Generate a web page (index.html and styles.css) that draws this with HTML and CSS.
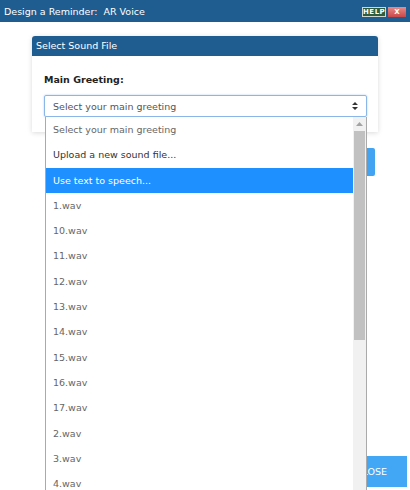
FILE: index.html
```html
<!DOCTYPE html>
<html lang="en">
<head>
    <meta charset="UTF-8">
    <meta name="viewport" content="width=device-width, initial-scale=1.0">
    <title>Design a Reminder</title>
    <link rel="stylesheet" href="styles.css">
</head>
<body>
    <div class="titlebar">
        <span class="title">Design a Reminder:&nbsp; AR Voice</span>
        <div class="win-buttons">
            <span class="btn-help">HELP</span>
            <span class="btn-x">X</span>
        </div>
    </div>

    <div class="content">
        <div class="panel">
            <div class="panel-head">Select Sound File</div>
            <div class="panel-body">
                <label class="field-label">Main Greeting:</label>
                <div class="select">
                    <span>Select your main greeting</span>
                    <svg class="select-arrows" width="6" height="8" viewBox="0 0 6 8">
                        <path d="M3 0 L6 3 H0 Z M3 8 L6 5 H0 Z" fill="#333"/>
                    </svg>
                </div>
            </div>
        </div>
        <div class="actions">
            <button class="btn-next">NEXT</button>
        </div>
        <div class="footer">
            <button class="btn-close">CLOSE</button>
        </div>

        <div class="dropdown">
            <ul class="options">
                <li>Select your main greeting</li>
                <li class="dark">Upload a new sound file...</li>
                <li class="active">Use text to speech...</li>
                <li>1.wav</li>
                <li>10.wav</li>
                <li>11.wav</li>
                <li>12.wav</li>
                <li>13.wav</li>
                <li>14.wav</li>
                <li>15.wav</li>
                <li>16.wav</li>
                <li>17.wav</li>
                <li>2.wav</li>
                <li>3.wav</li>
                <li>4.wav</li>
            </ul>
            <div class="scrollbar">
                <svg class="scroll-up" width="7" height="4" viewBox="0 0 7 4">
                    <path d="M3.5 0 L7 4 H0 Z" fill="#a3a3a3"/>
                </svg>
                <div class="thumb"></div>
            </div>
        </div>
    </div>
</body>
</html>
```

FILE: styles.css
```css
body {
    margin: 0;
    width: 410px;
    height: 490px;
    overflow: hidden;
    background-color: #fff;
    font-family: "DejaVu Sans", Verdana, sans-serif;
    font-size: 10px;
    color: #333;
}
.titlebar {
    height: 22px;
    background-color: #1f5d91;
    color: #fff;
    display: flex;
    align-items: center;
    justify-content: space-between;
    padding: 0 4px 0 4px;
}
.title {
    font-size: 9.5px;
}
.win-buttons {
    display: flex;
    gap: 2px;
    padding-top: 2px;
}
.btn-help {
    width: 22px;
    text-align: center;
    font-size: 7px;
    font-weight: bold;
    letter-spacing: 0.5px;
    line-height: 8px;
    background-color: #2f5d3b;
    border: 1px solid #cfd8cf;
    color: #fff;
}
.btn-x {
    width: 18px;
    text-align: center;
    font-size: 7px;
    font-weight: bold;
    line-height: 10px;
    color: #fff;
    background: linear-gradient(#e88a8a, #c94848);
}
.content {
    position: relative;
    padding: 14px 32px 0 32px;
    height: 454px;
    overflow: hidden;
}
.panel {
    background-color: #fff;
    border-radius: 3px 3px 0 0;
    box-shadow: 0 1px 5px rgba(0, 0, 0, 0.15);
}
.panel-head {
    height: 20px;
    line-height: 20px;
    padding-left: 4px;
    background-color: #1f5d91;
    color: #fff;
    border-radius: 3px 3px 0 0;
    font-size: 9.5px;
}
.panel-body {
    padding: 18px 11px 15px 12px;
}
.field-label {
    display: block;
    font-weight: bold;
    font-size: 9.5px;
    color: #222;
    margin-bottom: 10px;
}
.select {
    height: 20px;
    border: 1px solid #8ab6e8;
    border-radius: 2px;
    box-shadow: 0 0 2px rgba(102, 160, 230, 0.6);
    display: flex;
    align-items: center;
    justify-content: space-between;
    padding: 0 8px 0 8px;
    color: #555;
    font-size: 9.5px;
}
.actions {
    display: flex;
    justify-content: flex-end;
    padding: 16px 3px 0 0;
}
.btn-next {
    width: 90px;
    height: 28px;
    border: none;
    border-radius: 2px;
    background-color: #42a3f2;
    color: #fff;
}
.footer {
    display: flex;
    justify-content: flex-end;
    margin: 280px -29px 0 0;
}
.btn-close {
    width: 80px;
    height: 31px;
    border: none;
    background-color: #42a8f5;
    color: #fff;
    font-family: "DejaVu Sans", Verdana, sans-serif;
    font-size: 9.5px;
    text-align: right;
    padding-right: 20px;
}
.dropdown {
    position: absolute;
    left: 45px;
    top: 95px;
    width: 320px;
    height: 373px;
    background-color: #fff;
    border: 1px solid #aaa;
    border-top: none;
    border-bottom: none;
    display: flex;
}
.options {
    list-style: none;
    margin: 0;
    padding: 0;
    flex: 1;
}
.options li {
    height: 25.3px;
    line-height: 25.3px;
    padding-left: 7px;
    color: #666;
    font-size: 9.5px;
}
.options li.dark {
    color: #333;
}
.options li.active {
    background-color: #1e90ff;
    color: #fff;
}
.scrollbar {
    width: 13px;
    background-color: #f1f1f1;
    display: flex;
    flex-direction: column;
    align-items: center;
}
.scroll-up {
    margin: 5px 0 5px 0;
}
.thumb {
    width: 11px;
    height: 209px;
    background-color: #c1c1c1;
}
```
